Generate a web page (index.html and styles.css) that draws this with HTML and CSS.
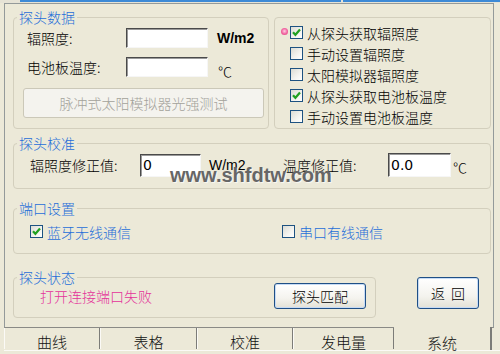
FILE: index.html
```html
<!DOCTYPE html>
<html>
<head>
<meta charset="utf-8">
<link rel="stylesheet" href="styles.css">
</head>
<body>
<div class="topbar"><span class="gap1"></span><span class="blue b1"></span><span class="gap2"></span><span class="blue b2"></span></div>
<div class="panel">
  <div class="row-top">
    <fieldset class="grp g1">
      <legend>探头数据</legend>
      <div class="frow r1"><span class="lbl w99">辐照度:</span><span class="field f82"></span><span class="unit bold">W/m2</span></div>
      <div class="frow r2"><span class="lbl w99">电池板温度:</span><span class="field f82"></span><span class="unit deg">℃</span></div>
      <div class="btn-disabled">脉冲式太阳模拟器光强测试</div>
    </fieldset>
    <fieldset class="grp g2">
      <div class="crow"><span class="focusdot"></span><span class="cb"><svg width="11" height="11" viewBox="0 0 11 11"><path d="M2 5.2l2.4 2.6L9 2.6" fill="none" stroke="#21a121" stroke-width="2.2"/></svg></span><span>从探头获取辐照度</span></div>
      <div class="crow"><span class="cb"></span><span>手动设置辐照度</span></div>
      <div class="crow"><span class="cb"></span><span>太阳模拟器辐照度</span></div>
      <div class="crow"><span class="cb"><svg width="11" height="11" viewBox="0 0 11 11"><path d="M2 5.2l2.4 2.6L9 2.6" fill="none" stroke="#21a121" stroke-width="2.2"/></svg></span><span>从探头获取电池板温度</span></div>
      <div class="crow"><span class="cb"></span><span>手动设置电池板温度</span></div>
    </fieldset>
  </div>

  <fieldset class="grp g3">
    <legend>探头校准</legend>
    <div class="frow r3">
      <span class="lbl w110">辐照度修正值:</span><span class="field f61"><span class="val">0</span></span><span class="unit w74">W/m2</span>
      <span class="lbl w105">温度修正值:</span><span class="field f63"><span class="val">0.0</span></span><span class="unit deg2">℃</span>
    </div>
  </fieldset>

  <fieldset class="grp g4">
    <legend>端口设置</legend>
    <div class="crow r4">
      <div class="citem w252"><span class="cb"><svg width="11" height="11" viewBox="0 0 11 11"><path d="M2 5.2l2.4 2.6L9 2.6" fill="none" stroke="#21a121" stroke-width="2.2"/></svg></span><span class="bluetext">蓝牙无线通信</span></div>
      <div class="citem"><span class="cb"></span><span class="bluetext">串口有线通信</span></div>
    </div>
  </fieldset>

  <div class="row-bottom">
    <fieldset class="grp g5">
      <legend>探头状态</legend>
      <div class="frow r5"><span class="pink">打开连接端口失败</span><span class="btn b92">探头匹配</span></div>
    </fieldset>
    <span class="btn bret">返&nbsp;&nbsp;回</span>
  </div>
</div>
<div class="tabs">
  <div class="tab t96">曲线</div>
  <div class="tab t97">表格</div>
  <div class="tab t96">校准</div>
  <div class="tab t101">发电量</div>
  <div class="tab sel">系统</div>
</div>
<div class="watermark">www.shfdtw.com</div>
</body>
</html>
```
FILE: styles.css
```css
html, body {
  margin: 0;
  padding: 0;
}
body {
  width: 500px;
  height: 354px;
  overflow: hidden;
  background: #ECE9D8;
  font-family: "Noto Sans CJK SC", "Liberation Sans", sans-serif;
  font-size: 14px;
  font-weight: 300;
  line-height: 16px;
  color: #000;
  position: relative;
}
.topbar {
  display: flex;
  height: 3px;
  background: #e6e3d6;
}
.gap1 { width: 20px; }
.gap2 { width: 2px; }
.blue { height: 2px; background: #3d8ad6; }
.b1 { width: 321px; }
.b2 { flex: 1; }

.panel {
  margin-left: 4px;
  width: 490px;
  height: 325px;
  box-sizing: border-box;
  border: 1px solid #949a9a;
  border-bottom-color: #8a8a86;
  background: #ECE9D8;
  padding: 6px 0 0 8px;
}
.grp {
  margin: 0;
  padding: 0;
  min-inline-size: 0;
  border: 1px solid #d3cfbd;
  border-radius: 4px;
  box-sizing: border-box;
}
legend {
  font-size: 14px;
  line-height: 14px;
  color: #1f6ed8;
  padding: 0 2px;
  margin-left: 3px;
}
.row-top {
  display: flex;
  gap: 5px;
  align-items: flex-start;
}
.g1 { width: 256px; height: 119px; }
.g2 { width: 217px; height: 112px; margin-top: 7px; padding: 4px 0 0 15px; }

.frow { display: flex; align-items: center; }
.r1 { margin-top: 4px; height: 20px; padding-left: 13px; }
.r2 { margin-top: 9px; height: 20px; padding-left: 13px; }
.lbl { display: block; flex: none; }
.w99 { width: 99px; }
.w110 { width: 110px; }
.w105 { width: 105px; }
.field {
  display: flex;
  align-items: center;
  flex: none;
  box-sizing: border-box;
  background: #fff;
  border: 1px solid;
  border-color: #4a4a4a #f6f6f6 #f6f6f6 #4a4a4a;
  box-shadow: inset 1px 1px 0 #9a9a9a;
}
.f82 { width: 82px; height: 20px; }
.f61 { width: 61px; height: 23px; }
.f63 { width: 63px; height: 24px; }
.val {
  font-family: "DejaVu Sans", "Liberation Sans", sans-serif;
  font-weight: normal;
  font-size: 14px;
  padding-left: 2px;
}
.unit { flex: none; margin-left: 9px; font-family: "Liberation Sans", sans-serif; font-weight: normal; }
.bold { font-weight: bold; }
.deg { font-family: "Noto Sans CJK SC", sans-serif; font-weight: 300; margin-top: 8px; margin-left: 10px; }
.w74 { width: 74px; margin-left: 8px; }
.deg2 { margin-left: 2px; margin-top: 4px; font-family: "Noto Sans CJK SC", sans-serif; font-weight: 300; }

.btn-disabled {
  margin: 11px 0 0 9px;
  width: 241px;
  height: 30px;
  box-sizing: border-box;
  border: 1px solid #cbc8b8;
  border-radius: 3px;
  background: #f4f3ee;
  color: #a3a29a;
  display: flex;
  align-items: center;
  justify-content: center;
}

.crow {
  display: flex;
  align-items: center;
  height: 21px;
}
.cb {
  flex: none;
  width: 13px;
  height: 13px;
  box-sizing: border-box;
  border: 1px solid #1d5281;
  background: linear-gradient(135deg, #dcdcd4 0%, #f4f4f0 60%, #ffffff 100%);
  margin-right: 4px;
  display: flex;
  align-items: center;
  justify-content: center;
}
.cb svg { display: block; }
.focusdot {
  width: 7px;
  height: 7px;
  border-radius: 50%;
  background: radial-gradient(circle at 50% 45%, #ffd0e4 0%, #f0609e 55%, #d8407e 100%);
  margin-left: -9px;
  margin-right: 2px;
  margin-top: -3px;
  flex: none;
}

.g3 { width: 478px; height: 53px; margin-top: 7px; }
.r3 { margin-top: 3px; padding-left: 16px; }

.g4 { width: 478px; height: 53px; margin-top: 12px; }
.r4 { margin-top: 6px; padding-left: 16px; }
.citem { display: flex; align-items: center; }
.w252 { width: 252px; }
.bluetext { color: #1f6ed8; }

.row-bottom { display: flex; align-items: flex-start; margin-top: 16px; }
.g5 { width: 363px; height: 48px; }
.r5 { margin-top: -1px; padding-left: 26px; height: 26px; }
.pink { color: #e4329a; width: 234px; flex: none; }
.btn {
  display: flex;
  align-items: center;
  justify-content: center;
  box-sizing: border-box;
  border: 1px solid #1f4f86;
  border-radius: 3px;
  background: linear-gradient(#ffffff 0%, #f4f3ee 60%, #e3e1d6 100%);
  box-shadow: inset 0 0 0 1px #c6dbf5;
  flex: none;
}
.b92 { width: 92px; height: 26px; }
.bret { width: 62px; height: 32px; margin-left: 41px; margin-top: 7px; }

.tabs {
  display: flex;
  margin-left: 4px;
  height: 22px;
  border-bottom: 1px solid #fbfaf6;
}
.tab {
  box-sizing: border-box;
  height: 21px;
  border-left: 1px solid #fbfaf6;
  border-right: 1px solid #7c7c78;
  display: flex;
  align-items: center;
  justify-content: center;
  font-size: 15px;
  padding-top: 6px;
  color: #111;
}
.t96 { width: 96px; }
.t97 { width: 97px; }
.t101 { width: 101px; }
.sel {
  width: 98px;
  height: 23px;
  margin-top: -1px;
  background: #ECE9D8;
  border-left: none;
  border-right: 2px solid #7c7c78;
  padding-top: 9px;
}
.watermark {
  position: absolute;
  left: 170px;
  top: 165px;
  font-family: "Liberation Sans", sans-serif;
  font-weight: bold;
  font-size: 20px;
  line-height: 20px;
  color: #666666;
  text-shadow: 1px 1px 1px rgba(255,255,255,0.7);
}
```
